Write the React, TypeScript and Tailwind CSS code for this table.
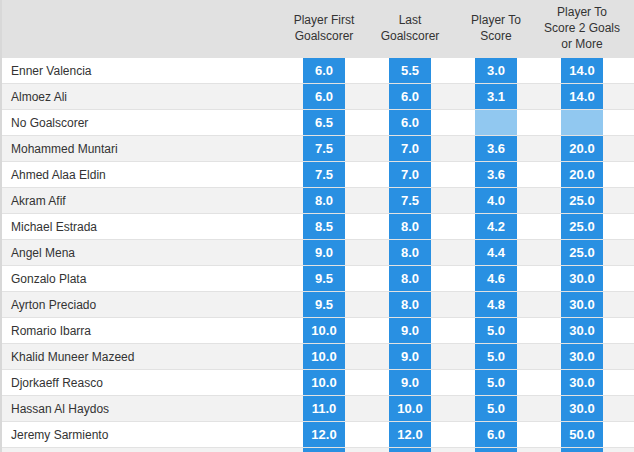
import React from 'react';

type Row = { name: string; odds: (string | null)[]; blank?: boolean };

const rows: Row[] = [
  { name: 'Enner Valencia', odds: ['6.0', '5.5', '3.0', '14.0'] },
  { name: 'Almoez Ali', odds: ['6.0', '6.0', '3.1', '14.0'] },
  { name: 'No Goalscorer', odds: ['6.5', '6.0', null, null] },
  { name: 'Mohammed Muntari', odds: ['7.5', '7.0', '3.6', '20.0'] },
  { name: 'Ahmed Alaa Eldin', odds: ['7.5', '7.0', '3.6', '20.0'] },
  { name: 'Akram Afif', odds: ['8.0', '7.5', '4.0', '25.0'] },
  { name: 'Michael Estrada', odds: ['8.5', '8.0', '4.2', '25.0'] },
  { name: 'Angel Mena', odds: ['9.0', '8.0', '4.4', '25.0'] },
  { name: 'Gonzalo Plata', odds: ['9.5', '8.0', '4.6', '30.0'] },
  { name: 'Ayrton Preciado', odds: ['9.5', '8.0', '4.8', '30.0'] },
  { name: 'Romario Ibarra', odds: ['10.0', '9.0', '5.0', '30.0'] },
  { name: 'Khalid Muneer Mazeed', odds: ['10.0', '9.0', '5.0', '30.0'] },
  { name: 'Djorkaeff Reasco', odds: ['10.0', '9.0', '5.0', '30.0'] },
  { name: 'Hassan Al Haydos', odds: ['11.0', '10.0', '5.0', '30.0'] },
  { name: 'Jeremy Sarmiento', odds: ['12.0', '12.0', '6.0', '50.0'] },
  // next row is cut off by the window, only the top of its cells shows
  { name: '', odds: ['', '', '', ''], blank: true },
];

const headers = [
  ['Player First', 'Goalscorer'],
  ['Last', 'Goalscorer'],
  ['Player To', 'Score'],
  ['Player To', 'Score 2 Goals', 'or More'],
];

const cols = 'grid grid-cols-[279px_86px_86px_86px_86px_1fr]';

export default function App() {
  return (
    <div className="h-[452px] w-[634px] overflow-hidden bg-white border-l-2 border-[#d8d8d8] text-[#333] font-['Liberation_Sans',Arial,sans-serif]">
      {/* header */}
      <div className={`${cols} h-[58px] bg-[#e1e1e1]`}>
        <div />
        {headers.map((lines, i) => (
          <div key={i} className="flex flex-col items-center justify-center pb-[2px] text-[12px] leading-[16px] text-center">
            {lines.map((l) => (
              <span key={l} className="whitespace-nowrap">{l}</span>
            ))}
          </div>
        ))}
        <div />
      </div>

      {rows.map((r, idx) => (
        <div
          key={idx}
          className={`${cols} h-[26px] border-b border-[#e2e2e2] ${idx % 2 === 1 ? 'bg-[#f2f2f2]' : 'bg-white'}`}
        >
          <div className="flex items-center pl-[9px] text-[12px]">{r.name}</div>
          {r.odds.map((o, i) => (
            <div key={i} className="flex justify-center">
              <div
                className={`w-[42px] h-full flex items-center justify-center text-white font-bold text-[13px] ${o !== null ? 'bg-[#2990e2]' : 'bg-[#91c8f0]'}`}
              >
                {o}
              </div>
            </div>
          ))}
          <div />
        </div>
      ))}
    </div>
  );
}
